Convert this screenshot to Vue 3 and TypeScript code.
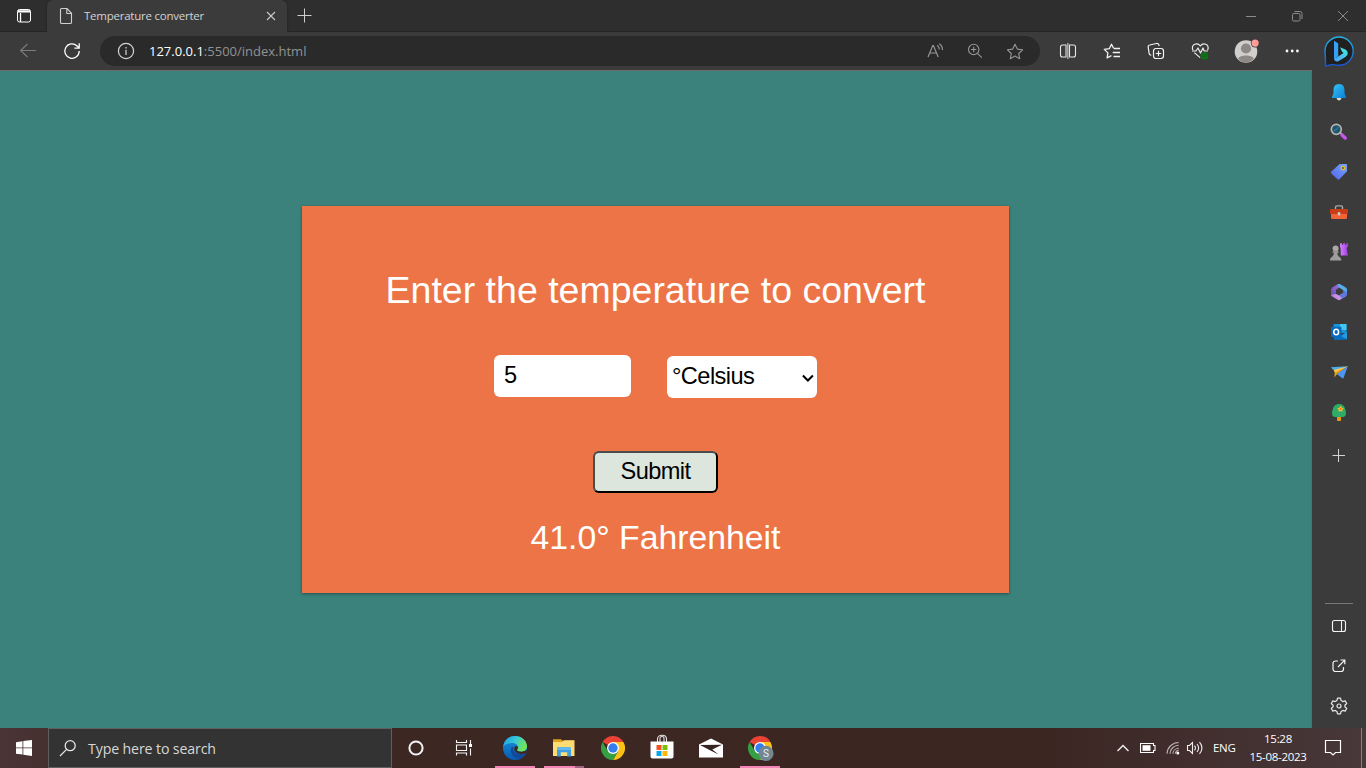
<script setup lang="ts">
import { ref } from 'vue'

type Unit = 'celsius' | 'fahrenheit'

const amount = ref<string>('5')
const unit = ref<Unit>('celsius')
const result = ref<string>('41.0° Fahrenheit')

function convert(): void {
  const value = Number(amount.value)
  result.value =
    unit.value === 'celsius'
      ? `${((value * 9) / 5 + 32).toFixed(1)}° Fahrenheit`
      : `${(((value - 32) * 5) / 9).toFixed(1)}° Celsius`
}
</script>

<template>
  <div class="screen">
    <header class="tabs">
      <div class="tab-menu">
        <svg width="16" height="16" viewBox="0 0 16 16" fill="none" stroke="#fff">
          <rect x="1.5" y="1.5" width="13" height="12.5" rx="2" />
          <path d="M2 2.800h12M2 3.800h12M4.500 5v9" stroke-width="1.300" />
        </svg>
      </div>
      <div class="tab">
        <svg class="page-icon" width="14" height="18" viewBox="0 0 14 18" fill="none" stroke="#d0d0d0" stroke-width="1.1">
          <path d="M2.5 1.5H8l4.5 4.8v8.9a1.3 1.3 0 0 1-1.3 1.3H2.8a1.3 1.3 0 0 1-1.3-1.3V2.5a1 1 0 0 1 1-1zM7.8 1.8v4.7h4.5" />
        </svg>
        <span class="tab-title">Temperature converter</span>
        <svg class="tab-close" width="10" height="10" viewBox="0 0 10 10" stroke="#c8c8c8" stroke-width="1.1"><path d="M1 1l8 8M9 1l-8 8" /></svg>
      </div>
      <svg class="new-tab" width="16" height="16" viewBox="0 0 16 16" stroke="#cfcfcf"><path d="M1.500 7.500h14M8.500 .5v14" /></svg>
      <div class="window-controls">
        <svg width="12" height="12" viewBox="0 0 12 12" stroke="#8b8b8b"><path d="M1 6.5h10" /></svg>
        <svg width="12" height="12" viewBox="0 0 12 12" fill="none" stroke="#8b8b8b"><rect x="1.5" y="3.5" width="7.5" height="7.5" rx="1.2" /><path d="M3.5 1.5H9a2 2 0 0 1 2 2V9" /></svg>
        <svg width="12" height="12" viewBox="0 0 12 12" stroke="#8b8b8b"><path d="M1 1l10 10M11 1L1 11" /></svg>
      </div>
    </header>

    <nav class="toolbar">
      <div class="nav-button">
        <svg width="18" height="16" viewBox="0 0 18 16" fill="none" stroke="#7c7c7c" stroke-width="1.1"><path d="M17 7.500H1.5M8.5 1L1.6 7.500l6.900 6.500" /></svg>
      </div>
      <div class="nav-button">
        <svg width="18" height="18" viewBox="0 0 18 18" fill="none" stroke="#fff" stroke-width="1.3"><path d="M16.2 9A7.2 7.2 0 1 1 13.8 3.7L16 5.7M16.2 1.3v4.8h-4.8" /></svg>
      </div>
      <div class="address">
        <svg class="info" width="18" height="18" viewBox="0 0 18 18" fill="none" stroke="#d6d6d6" stroke-width="1.2"><circle cx="9" cy="9" r="7.6" /><path d="M9 7.8V13M9 5v1.5" /></svg>
        <span class="url"><b>127.0.0.1</b>:5500/index.html</span>
        <div class="address-tools">
          <svg width="18" height="16" viewBox="0 0 18 16" fill="none" stroke="#969696" stroke-width="1.2"><path d="M2 14L6.800 2.500h.6L12.200 14M3.800 10h6.600M11.200 2.200c1.300 1 2 2.300 2.100 4.200M13.200 .8c2.200 1.400 3.300 3.500 3.300 6.200" /></svg>
          <svg width="16" height="16" viewBox="0 0 16 16" fill="none" stroke="#969696" stroke-width="1.1"><circle cx="6.7" cy="6.5" r="5.2" /><path d="M10.5 10.3l4.3 4.3M4 6.500h5.400M6.7 3.8v5.4" /></svg>
          <svg width="18" height="17" viewBox="0 0 18 17" fill="none" stroke="#969696" stroke-width="1.1" stroke-linejoin="round"><path d="M9 1.3l2.3 4.8 5.3.7-3.9 3.7 1 5.2L9 13.1l-4.7 2.6 1-5.2-3.9-3.7 5.3-.7z" /></svg>
        </div>
      </div>
      <div class="actions">
        <svg width="18" height="18" viewBox="0 0 18 18" fill="none" stroke="#e6e6e6" stroke-width="1.1"><path d="M7 3H3.5a2 2 0 0 0-2 2v8a2 2 0 0 0 2 2H7zM10.5 3h4a2 2 0 0 1 2 2v8a2 2 0 0 1-2 2h-4z" /><path d="M8.800 1v16" stroke="#a9a9a9" stroke-width="1.5" /></svg>
        <svg width="18" height="17" viewBox="0 0 18 17" fill="none" stroke="#f2f2f2" stroke-width="1.3" stroke-linejoin="round"><path d="M10.6 5.3L8.5 1.2 6.3 5.7l-5 .7 3.6 3.5-.8 5 4.3-2.3M10.700 5.500H17M9.7 9.500H17M10.5 13.500H17" /></svg>
        <svg width="18" height="18" viewBox="0 0 18 18" fill="none" stroke="#f2f2f2" stroke-width="1.2"><rect x="6.500" y="6.500" width="10" height="10" rx="2.4" /><path d="M11.5 8.8v5.5M8.8 11.5h5.4M4.3 13.2c-1.3 0-2-.6-2.2-1.8L1.2 5.2c-.2-1.2.3-2 1.6-2.2l6.500-1.500c1.400-.2 2.200.3 2.600 1.500l.3 1" /></svg>
        <svg width="19" height="18" viewBox="0 0 19 18" fill="none" stroke="#ededed" stroke-width="1.2" stroke-linejoin="round"><path d="M2 8C.7 5.6 1.5 3.2 3.8 2.3 6 1.5 8 2.2 9.3 4c1.3-1.8 3.3-2.5 5.5-1.7 2.3.9 3 3.3 1.8 5.7M1 9h4l2-3 2.5 5 2.5-5 1.2 3H17M3.3 10.600l5.800 5" /><circle cx="13.500" cy="14" r="3.800" fill="#0b7414" stroke="none" /><path d="M12 14l1 1 2.3-2.3" stroke="#36453a" stroke-width=".9" /></svg>
        <svg class="avatar" width="26" height="26" viewBox="0 0 26 26"><circle cx="13" cy="13.5" r="11.3" fill="#d1cfcd" /><circle cx="13" cy="10.5" r="5.1" fill="#8c8987" /><path d="M5.2 20.500c1.500-4 14.100-4 15.600 0-3.300 5.400-12.100 5.600-15.600 0z" fill="#8c8987" /><circle cx="22.1" cy="5.1" r="4.3" fill="#3b3b3b" /><circle cx="22.1" cy="5.1" r="3.6" fill="#ff9c98" /></svg>
        <svg width="16" height="6" viewBox="0 0 16 6" fill="#f5f5f5"><circle cx="3" cy="3" r="1.400" /><circle cx="8.200" cy="3" r="1.400" /><circle cx="13.400" cy="3" r="1.400" /></svg>
      </div>
      <svg class="bing" width="32" height="32" viewBox="0 0 32 32">
        <defs>
          <linearGradient id="ring" x1="0" y1="0" x2="0" y2="1"><stop offset="0" stop-color="#24b4e8" /><stop offset="1" stop-color="#1756d6" /></linearGradient>
          <linearGradient id="bee" x1="0" y1="0" x2="1" y2="1"><stop offset="0" stop-color="#1b7cf4" /><stop offset=".55" stop-color="#2c9bf5" /><stop offset="1" stop-color="#43e2dc" /></linearGradient>
          <linearGradient id="bee-tail" x1="0" y1="1" x2="1" y2="0"><stop offset="0" stop-color="#4a9bff" /><stop offset="1" stop-color="#47dce4" /></linearGradient>
        </defs>
        <path d="M2 16A14.1 14.1 0 1 1 16 30.200c-4 .3-6.500-1.400-9-.3-2 .8-3.200 1-4.700.8C3 26 2 20 2 16z" fill="#202020" stroke="url(#ring)" stroke-width="1.400" />
        <path d="M11 5.800l4.200 2.400v13.100L11 24z" fill="#35a1f6" />
        <path d="M17 12.200l4.800 2.100c3 1.300 3.800 4.500 1.700 6.800l-.9-2.200-3.400-1.900z" fill="#43dfe0" />
        <path d="M11 23.800l4.300-2.400 5.200-3.500c2.600-.4 4 1.600 2.300 3.800l-7 4.300c-2.400 1.300-4.400.2-4.800-2.200z" fill="url(#bee-tail)" />
      </svg>
    </nav>

    <div class="workspace">
      <main class="page">
        <form class="card" @submit.prevent="convert">
          <h1>Enter the temperature to convert</h1>
          <div class="fields">
            <input v-model="amount" type="text" />
            <div class="select-wrap">
              <select v-model="unit">
                <option value="celsius">°Celsius</option>
                <option value="fahrenheit">°Fahrenheit</option>
              </select>
              <svg class="chevron" width="13" height="9" viewBox="0 0 13 9" fill="none" stroke="#000" stroke-width="2"><path d="M1.900 1.500l5 5 5-5" /></svg>
            </div>
          </div>
          <button type="submit">Submit</button>
          <p>{{ result }}</p>
        </form>
      </main>

      <aside class="sidebar">
        <div class="slot"><svg width="18" height="18" viewBox="0 0 18 18"><defs><linearGradient id="bell" x1="0" y1="0" x2="1" y2="1"><stop stop-color="#36c4f6" /><stop offset="1" stop-color="#087fd8" /></linearGradient></defs><path d="M6.700 15h4.600c0 3.200-4.600 3.200-4.600 0z" fill="#ddd" /><path d="M9 1c4 0 5.500 2.800 5.500 6.200v3l1.400 3.500c.3.800 0 1.300-.8 1.300H2.900c-.8 0-1.100-.5-.8-1.300l1.400-3.500v-3C3.500 3.800 5 1 9 1z" fill="url(#bell)" /></svg></div>
        <div class="slot"><svg width="18" height="18" viewBox="0 0 18 18"><path d="M10 9.500l3 3" stroke="#aaa" stroke-width="2" /><path d="M12.200 12.200l3 2.800" stroke="#c653f2" stroke-width="3.500" stroke-linecap="round" /><circle cx="6.300" cy="6.300" r="5" fill="#20546d" stroke="#b8b5b1" stroke-width="1.700" /><path d="M3.500 8c2-.5 4-2 5-4" stroke="#347999" stroke-width="1.300" fill="none" /></svg></div>
        <div class="slot"><svg width="18" height="18" viewBox="0 0 18 18"><defs><linearGradient id="tag" x1="1" y1="0" x2="0" y2="1"><stop stop-color="#78a9ff" /><stop offset="1" stop-color="#5162ed" /></linearGradient></defs><path d="M9.700 1h6.100c.8 0 1.200.5 1.200 1.200v6L9.700 16c-.8.8-1.700.8-2.500 0L1.600 10.800c-.8-.8-.8-1.800 0-2.500z" fill="url(#tag)" /><circle cx="12.900" cy="5" r="1.700" fill="#44517d" stroke="#f0c020" stroke-width="1.300" /></svg></div>
        <div class="slot"><svg width="20" height="18" viewBox="0 0 20 18"><path d="M6.500 6V4.200c0-1 .4-1.300 1.300-1.300h4.400c.9 0 1.300.3 1.300 1.300V6" fill="none" stroke="#aaa8a5" stroke-width="1.400" /><path d="M2 10h16v4.700c0 .8-.4 1.200-1.200 1.200H3.200c-.8 0-1.200-.4-1.200-1.200z" fill="#f26336" /><rect x="1" y="6" width="18" height="5" rx="1" fill="#c83d15" /><rect x="8.700" y="9" width="2.700" height="3.500" rx="1" fill="#c8c5c2" /></svg></div>
        <div class="slot"><svg width="20" height="20" viewBox="0 0 20 20"><defs><linearGradient id="rook"><stop stop-color="#d780ff" /><stop offset="1" stop-color="#9c3ee0" /></linearGradient></defs><path d="M11 1.200h1.900v1.500h1.300V1.200h1.900v1.500h1.300V1.200H19v3.200l-1.400 1.500.8 5.300.7 2.300h-7.400V9l-.1-2.900L11 4.500z" fill="url(#rook)" /><circle cx="6.600" cy="6.500" r="3" fill="#aaa9a7" /><path d="M3.500 9.200h6.200v1.200l-1.300.6c.2 2.400.9 3 2.200 4.100 1.200.9 1.700 1.700 1.700 3.400H1c0-1.700.5-2.500 1.700-3.400C4 14 4.700 13.400 4.900 11l-1.400-.6z" fill="#9e9d9b" /></svg></div>
        <div class="slot"><svg width="18" height="18" viewBox="0 0 18 18"><defs><linearGradient id="suite-left" x1="1" y1="0" x2="0" y2="1"><stop stop-color="#a66ee0" /><stop offset="1" stop-color="#6351b9" /></linearGradient><linearGradient id="suite-bottom"><stop stop-color="#b880da" /><stop offset=".55" stop-color="#c996ea" /><stop offset="1" stop-color="#705fd0" /></linearGradient></defs><path d="M7.800 1.300c.8-.5 1.700-.5 2.500 0l5.500 3.200c.8.500 1.200 1.200 1.200 2v4.700L13.400 9V7.200L8.600 4.300 7 2z" fill="#50b0eb" /><path d="M7.800 1.300L2.200 4.500C1.400 5 1 5.700 1 6.500v5.200l4.900-1.100V6.700L9 4.800z" fill="url(#suite-left)" /><path d="M1 11.700c0 .8.400 1.400 1.200 1.900l5.600 3.200c.8.500 1.700.5 2.500 0l5.500-3.200-3-3.500-3.700 2.400-3.200-1.800z" fill="url(#suite-bottom)" /><path d="M13.400 7L17 9v2.500c0 .9-.4 1.600-1.200 2.100l-3 1.700-3.700-2.800 4.300-2.500z" fill="#6078dc" /></svg></div>
        <div class="slot"><svg width="18" height="18" viewBox="0 0 18 18"><path d="M3.5 2c0-.6.4-1 1-1h11c.6 0 1 .4 1 1v8H3.5z" fill="#1496df" /><path d="M10 1h6.500v6H10z" fill="#43c5f0" /><path d="M4 8l6.500 5 6.500-4v6.500c0 .8-.5 1.200-1.200 1.200H4z" fill="#0872c2" /><path d="M17 9v7l-6.500-3z" fill="#229be0" /><rect x="1" y="3.800" width="10.500" height="10.500" rx="1" fill="#0869bd" /><ellipse cx="6.200" cy="9" rx="2.400" ry="2.800" fill="none" stroke="#fff" stroke-width="1.500" /></svg></div>
        <div class="slot"><svg width="19" height="18" viewBox="0 0 19 18"><path d="M.8 4.200l17-.9L7 9.300 3.200 6.700z" fill="#4cafe8" /><path d="M17.800 3.300L4.700 8.300l-.2 6.200 2.600-3.600z" fill="#e99d12" /><path d="M17.800 3.300L6.800 11l5.500 4.200c.6.500 1 .3 1.300-.4z" fill="#4c97f4" /><path d="M17.800 3.300L3.800 7l1 2.600z" fill="#ffc544" /></svg></div>
        <div class="slot"><svg width="18" height="19" viewBox="0 0 18 19"><path d="M7 12h4v5c0 .6-.4 1-1 1H8c-.6 0-1-.4-1-1z" fill="#e8960b" /><path d="M9 1c3.800 0 5.600 2.500 6.200 5.200.6 1.600.8 3 .8 4.200 0 2.600-1.700 3.600-4.200 3.600H6.200C3.700 14 2 13 2 10.400c0-1.200.2-2.600.8-4.200C3.400 3.500 5.200 1 9 1z" fill="#2eab67" /><path d="M10.600 2.900l1 1.700 2.200.8-1.500 1.300.1 2.100-1.800-.8-2 .8.100-2.100-1.500-1.300 2.400-.8z" fill="#ffbf2e" /><circle cx="10.600" cy="5.900" r="1" fill="#e66d12" /></svg></div>
        <div class="slot add"><svg width="14" height="14" viewBox="0 0 14 14" stroke="#d4d4d4"><path d="M.5 7.500h12.500M6.500 1v13" /></svg></div>
        <div class="sidebar-bottom">
          <div class="slot"><svg width="16" height="14" viewBox="0 0 16 14" fill="none" stroke="#f5f5f5" stroke-width="1.100"><rect x="1.500" y="1.500" width="13" height="11" rx="2" /><path d="M10.500 1.500v11" /></svg></div>
          <div class="slot"><svg width="14" height="14" viewBox="0 0 14 14" fill="none" stroke="#f5f5f5" stroke-width="1.200"><path d="M6 2H3.500a2.500 2.500 0 0 0-2.500 2.500v5.500A2.500 2.500 0 0 0 3.500 12.500h5.500a2.500 2.500 0 0 0 2.500-2.500V8M8.500 1h4.300v4.300M12.800 1.200L6 8" /></svg></div>
          <div class="slot"><svg width="18" height="18" viewBox="0 0 18 18" fill="none" stroke="#e8e8e8" stroke-width="1.200" stroke-linejoin="round"><path d="M7.500 1.200h3l.6 2.400 1.700 1 2.400-.7 1.500 2.600L14.900 8.200v1.600l1.800 1.700-1.500 2.600-2.400-.7-1.700 1-.6 2.400h-3l-.6-2.400-1.700-1-2.400.7-1.500-2.600 1.800-1.700V8.200L1.300 6.500l1.500-2.600 2.400.7 1.700-1z" /><circle cx="9" cy="9" r="2" /></svg></div>
        </div>
      </aside>
    </div>

    <footer class="taskbar">
      <div class="start"><svg width="16" height="16" viewBox="0 0 16 16" fill="#fff"><path d="M0 2.200L6.500 1.300v6.200H0zM7.300 1.100L16 0v7.500H7.300zM0 8.300h6.500v6.200L0 13.700zM7.300 8.300H16V16l-8.700-1.200z" /></svg></div>
      <div class="search">
        <svg width="18" height="18" viewBox="0 0 18 18" fill="none" stroke="#e5e5e5" stroke-width="1.300"><circle cx="11.200" cy="6.700" r="5" /><path d="M7.600 10.400L1 17" /></svg>
        <span>Type here to search</span>
      </div>
      <div class="shell-button"><svg width="18" height="18" viewBox="0 0 18 18"><circle cx="9" cy="9" r="6.600" fill="none" stroke="#f5f5f5" stroke-width="2" /></svg></div>
      <div class="shell-button"><svg width="18" height="18" viewBox="0 0 18 18" fill="none" stroke="#f5f5f5" stroke-width="1.100"><path d="M1.500 1v2.500h10V1M1.500 16.500V14h10v2.500M1.500 6h10v5.500h-10zM15.500 1v4.500M15.500 9.500v7" /><path d="M14 5h3v3h-3z" fill="#fff" stroke="none" /></svg></div>
      <div class="apps">
        <div class="app active">
          <svg width="24" height="24" viewBox="0 0 24 24">
            <defs>
              <linearGradient id="wave" x1="0" y1="0" x2="1" y2=".4"><stop stop-color="#199bd9" /><stop offset=".5" stop-color="#35c5df" /><stop offset="1" stop-color="#72e657" /></linearGradient>
              <linearGradient id="swirl" x1="0" y1="0" x2="0" y2="1"><stop stop-color="#1a92dc" /><stop offset="1" stop-color="#075ab2" /></linearGradient>
            </defs>
            <circle cx="12" cy="12" r="12" fill="url(#swirl)" />
            <path d="M.2 11C1 4 6 0 12 0c7 0 12 5 12 10.300 0 3.300-2.500 5.500-5.500 5.500-2.500 0-4.500-.7-4.500-1.700 0-.7 1-1.200 1-2.800 0-2.300-2.500-4.200-6-4.200C4.900 7.100 1.300 8.700.2 11z" fill="url(#wave)" />
            <path d="M9 10.500c-3.500 6 1 12.500 8 12.300 2.400-1.100 4.500-2.900 5.700-5.100.3-.6-.2-.9-.7-.6-5 2.300-13.200.2-11.600-5.600z" fill="#12499b" />
            <path d="M15 11.300c0 1.600-1 2.100-1 2.800 0 1.100 2 1.800 4.800 1.700l5.400-1.700-1.500 3.200c-6 2-13.100-1.100-11.100-6.400.8-1.200 2.300-1.200 3.400.4z" fill="#3c2723" />
          </svg>
        </div>
        <div class="app active grouped">
          <svg width="24" height="24" viewBox="0 0 24 24"><path d="M1 3.200h8l1.600 1.500H22V20H1z" fill="#e3a21b" /><path d="M1 6h9l2-1.800h10.500V20H1z" fill="#ffdc72" /><path d="M5 12.500c0-.8.500-1.300 1.300-1.300h11.400c.8 0 1.300.5 1.300 1.300v8h-3.800v-4.300H8.800v4.300H5z" fill="#3f9fe0" /><path d="M5 12.500c0-.8.500-1.300 1.300-1.300h11.400c.8 0 1.300.5 1.300 1.300V14H5z" fill="#62b9ed" /></svg>
        </div>
        <div class="app">
          <svg width="24" height="24" viewBox="0 0 24 24"><path d="M12 12L1.600 6A12 12 0 0 1 22.400 6z" fill="#ea4335" /><path d="M22.400 6A12 12 0 0 1 12 24l5.200-9L12 6z" fill="#fbc116" /><path d="M1.600 6A12 12 0 0 0 12 24l5.200-9-10.400 0z" fill="#34a043" /><circle cx="12" cy="12" r="6" fill="#fff" /><circle cx="12" cy="12" r="4.700" fill="#347ded" /></svg>
        </div>
        <div class="app">
          <svg class="store" width="24" height="26" viewBox="0 0 24 26"><path d="M7.500 8V5c0-5 9-5 9 0v3M10 8V4c0-2 4-2 4 0v4" fill="none" stroke="#e5e5e5" stroke-width="1.100" /><path d="M.5 7.500h23v15c0 1.300-.8 2-2 2h-19c-1.200 0-2-.7-2-2z" fill="#fff" /><path d="M6.500 11h5v5h-5z" fill="#f35325" /><path d="M12.500 11h5v5h-5z" fill="#81bc06" /><path d="M6.500 17h5v5h-5z" fill="#05a6f0" /><path d="M12.500 17h5v5h-5z" fill="#ffba08" /></svg>
        </div>
        <div class="app">
          <svg width="24" height="20" viewBox="0 0 24 20"><path d="M0 6.500L12 .5l12 6v13H0z" fill="#fff" /><path d="M1 7l22-.2-9.700 4.700 6.300 5L10.500 12z" fill="#352421" /></svg>
        </div>
        <div class="app active">
          <svg class="profile-chrome" width="28" height="26" viewBox="0 0 28 26"><g transform="translate(1 1)"><path d="M12 12L1.600 6A12 12 0 0 1 22.400 6z" fill="#ea4335" /><path d="M22.400 6A12 12 0 0 1 12 24l5.200-9L12 6z" fill="#fbc116" /><path d="M1.600 6A12 12 0 0 0 12 24l5.200-9-10.400 0z" fill="#34a043" /><circle cx="12" cy="12" r="6" fill="#fff" /><circle cx="12" cy="12" r="4.700" fill="#347ded" /></g><circle cx="19" cy="18.400" r="7.600" fill="#718894" /><text x="19" y="22" text-anchor="middle" fill="#eee" font-family="Roboto, sans-serif" font-size="10">S</text></svg>
        </div>
      </div>
      <div class="tray">
        <svg width="14" height="8" viewBox="0 0 14 8" fill="none" stroke="#f0f0f0" stroke-width="1.400"><path d="M1.500 7L7 1.500 12.500 7" /></svg>
        <svg width="16" height="10" viewBox="0 0 16 10"><path d="M.5 .5h13v2h1.500v5h-1.500v2H.5z" fill="none" stroke="#fff" stroke-width="1.100" /><path d="M2.500 2.200h8v5.600h-8z" fill="#fff" /></svg>
        <svg width="14" height="14" viewBox="0 0 14 14" fill="none" stroke="#bdb4b3" stroke-width="1.100"><path d="M1 12.700A11.700 11.700 0 0 1 12.700 1.500M4 12.700A8.700 8.700 0 0 1 12.700 4.300M6.800 12.700A6 6 0 0 1 12.700 7.200M9.300 12.700a3.400 3.400 0 0 1 3.400-3.400" /><circle cx="11.800" cy="12" r="1.500" fill="#fff" stroke="none" /></svg>
        <svg width="18" height="14" viewBox="0 0 18 14" fill="none" stroke="#eee" stroke-width="1.100"><path d="M1.500 4.500h2l3-3v11l-3-3h-2zM8.500 4.700c1.200 1.500 1.200 3.200 0 4.700M11 3c2 2.500 2 5.500 0 8M13.500 1.200c3 3.500 3 8 0 11.600" /></svg>
        <span class="lang">ENG</span>
        <div class="clock"><span>15:28</span><span>15-08-2023</span></div>
        <svg width="18" height="18" viewBox="0 0 18 18" fill="none" stroke="#fff" stroke-width="1.200"><path d="M1.500 1.500h15v12h-5L9 16l-2.500-2.500h-5z" /></svg>
        <i class="show-desktop"></i>
      </div>
    </footer>
  </div>
</template>

<style>
html,
body {
  margin: 0;
  overflow: hidden;
}
</style>

<style scoped>
.screen,
.screen * {
  box-sizing: border-box;
}
.screen {
  width: 1366px;
  height: 768px;
  display: grid;
  grid-template-rows: 32px 38px 658px 40px;
  font-family: "Open Sans", "Noto Sans", sans-serif;
  background: #3b3b3b;
}
svg {
  display: block;
  flex: none;
}
.tabs {
  display: flex;
  align-items: center;
  background: #2e2e2e;
  border-bottom: 1px solid #252525;
}
.tab-menu {
  width: 47px;
  padding-left: 16px;
}
.tab {
  width: 240px;
  height: 32px;
  align-self: flex-start;
  display: flex;
  align-items: center;
  padding: 0 11px 0 12px;
  border-radius: 6px 6px 0 0;
  background: #3b3b3b;
  box-shadow: 0 0 2px #1d1d1d;
  clip-path: inset(0 -3px 0 -3px);
}
.tab-title {
  flex: 1;
  margin: -2px 0 0 11px;
  color: #d2d2d2;
  font-size: 11.5px;
  letter-spacing: -0.24px;
  white-space: nowrap;
}
.new-tab {
  margin-left: 9px;
}
.window-controls {
  display: flex;
  gap: 34px;
  margin-left: auto;
  margin-right: 17px;
}
.toolbar {
  display: flex;
  align-items: center;
  padding-left: 6px;
  background: #3b3b3b;
}
.nav-button {
  width: 44px;
  display: grid;
  place-items: center;
}
.address {
  width: 940px;
  height: 30px;
  margin-left: 6px;
  display: flex;
  align-items: center;
  padding: 0 16px 0 17px;
  border-radius: 15px;
  background: #2a2a2a;
}
.url {
  margin-left: 14px;
  color: #929292;
  font-size: 13px;
  white-space: nowrap;
}
.url b {
  color: #fff;
  font-weight: 400;
}
.address-tools {
  margin-left: auto;
  display: flex;
  align-items: center;
  gap: 23px;
}
.actions {
  width: 270px;
  padding-left: 6px;
  display: grid;
  grid-template-columns: 44px 44px 44px 44px 48px 44px;
  align-items: center;
  justify-items: center;
}
.bing {
  margin-left: 13px;
}
.workspace {
  display: grid;
  grid-template-columns: 1312px 54px;
}
.page {
  display: flex;
  justify-content: center;
  align-items: flex-start;
  padding-top: 135px;
  background: #3b827d;
  border-top: 1px solid #6b6b6b;
  border-right: 1px solid #666;
}
.card {
  width: 707px;
  height: 387px;
  display: flex;
  flex-direction: column;
  align-items: center;
  padding-top: 62px;
  background: #ec7446;
  box-shadow: 0 1px 3px rgba(0, 0, 0, 0.4);
  color: #fff;
  font-family: "Liberation Sans", Arial, sans-serif;
}
h1 {
  margin: 0 0 43px;
  font-size: 37.5px;
  font-weight: 400;
  line-height: 44px;
}
.fields {
  display: flex;
  gap: 36px;
  height: 43px;
}
input,
select,
button {
  font-family: "Liberation Sans", Arial, sans-serif;
  font-size: 23.6px;
  letter-spacing: -0.57px;
  color: #000;
  outline: none;
}
input {
  width: 137px;
  height: 42px;
  padding: 0 10px 1px;
  border: 0;
  border-radius: 6px;
  background: #fff;
}
.select-wrap {
  position: relative;
  width: 150px;
  height: 42px;
  margin-top: 1px;
}
select {
  width: 150px;
  height: 42px;
  padding: 0 5px 2px;
  border: 0;
  border-radius: 6px;
  background: #fff;
  appearance: none;
}
.chevron {
  position: absolute;
  right: 3px;
  top: 18px;
}
button {
  width: 125px;
  height: 42px;
  margin-top: 53px;
  padding: 0 0 1px;
  border: 2px solid;
  border-color: #4c4c4c #000 #000 #4c4c4c;
  border-radius: 6px;
  background: #dce6dd;
}
p {
  margin: 24px 0 0;
  font-size: 33.75px;
  line-height: 40px;
}
.sidebar {
  display: flex;
  flex-direction: column;
  padding-top: 2px;
  background: #3b3b3b;
}
.slot {
  height: 40px;
  flex: none;
  display: grid;
  place-items: center;
}
.add {
  margin-top: 3px;
}
.sidebar-bottom {
  margin: auto 13px 2px;
  padding-top: 2px;
  border-top: 1px solid #777;
}
.taskbar {
  display: flex;
  align-items: center;
  background: linear-gradient(90deg, #4a3436 0, #46302f 48px, #3c2723 390px, #3b2622 1050px, #48383a 1366px);
  color: #fff;
}
.start {
  width: 48px;
  display: grid;
  place-items: center;
}
.search {
  width: 344px;
  height: 40px;
  display: flex;
  align-items: center;
  padding-left: 10px;
  border: 1px solid #5f5f5f;
  background: #333;
}
.search span {
  margin-left: 11px;
  color: #d7d7d7;
  font-size: 14.2px;
  letter-spacing: -0.14px;
}
.shell-button {
  width: 48px;
  display: grid;
  place-items: center;
}
.apps {
  height: 40px;
  margin-left: 2px;
  display: flex;
}
.app {
  width: 49px;
  height: 40px;
  display: grid;
  place-items: center;
  position: relative;
}
.active::after {
  content: "";
  position: absolute;
  left: 5px;
  bottom: 0;
  width: 40px;
  height: 2px;
  background: #f285b5;
}
.grouped::after {
  background: linear-gradient(90deg, #f285b5 31px, #a26180 31px);
}
.store {
  margin-top: -2px;
}
.profile-chrome {
  margin-left: 3px;
}
.tray {
  margin-left: auto;
  height: 40px;
  display: flex;
  align-items: center;
  font-size: 11.5px;
}
.tray > svg:nth-of-type(2) {
  margin-left: 10px;
}
.tray > svg:nth-of-type(3) {
  margin-left: 10px;
}
.tray > svg:nth-of-type(4) {
  margin-left: 6px;
}
.lang {
  width: 24px;
  margin: -2px 0 0 9px;
  letter-spacing: -0.3px;
}
.clock {
  width: 60px;
  margin: 0 16px 0 11px;
  display: flex;
  flex-direction: column;
  align-items: center;
  line-height: 18px;
  white-space: nowrap;
  letter-spacing: -0.3px;
}
.show-desktop {
  width: 1px;
  height: 40px;
  margin: 0 4px 0 19px;
  background: #8b8080;
}
</style>
